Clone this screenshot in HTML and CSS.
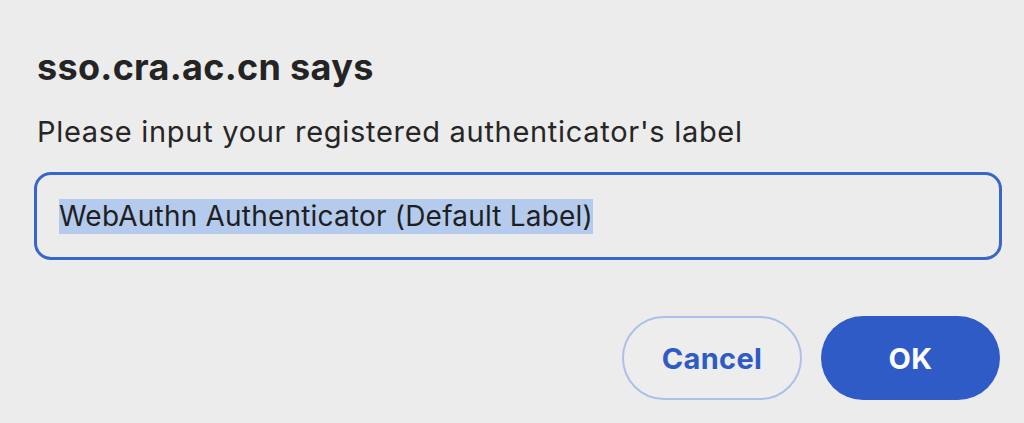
FILE: index.html
```html
<!DOCTYPE html>
<html lang="en">
<head>
<meta charset="utf-8">
<title>sso.cra.ac.cn says</title>
<link rel="stylesheet" href="styles.css">
</head>
<body>
<div class="dialog">
  <h1 class="title">sso.cra.ac.cn says</h1>
  <p class="message">Please input your registered authenticator's label</p>
  <div class="field"><span class="selected">WebAuthn Authenticator (Default Label)</span></div>
  <div class="actions">
    <button class="btn btn-cancel">Cancel</button>
    <button class="btn btn-ok">OK</button>
  </div>
</div>
</body>
</html>
```
FILE: styles.css
```css
html, body {
  margin: 0;
  padding: 0;
  background: #ececec;
}
body {
  font-family: Inter, "Liberation Sans", Arial, sans-serif;
  color: #222222;
}
.dialog {
  padding: 44px 22px 0 34px;
  display: flex;
  flex-direction: column;
}
.title {
  margin: 0;
  padding-left: 3px;
  font-size: 36px;
  font-weight: 700;
  letter-spacing: 0.3px;
  line-height: 46px;
  color: #242424;
}
.message {
  margin: 24px 0 0;
  padding-left: 3px;
  font-size: 29px;
  letter-spacing: 0.7px;
  line-height: 36px;
  color: #262626;
}
.field {
  margin-top: 22px;
  height: 88px;
  box-sizing: border-box;
  border: 3px solid #3b66c9;
  border-radius: 17px;
  padding: 0 22px;
  display: flex;
  align-items: center;
  font-size: 28px;
  letter-spacing: 0.2px;
  color: #1f1f1f;
}
.selected {
  background: #b5cbee;
  line-height: 35px;
}
.actions {
  margin-top: 56px;
  display: flex;
  justify-content: flex-end;
  gap: 19px;
  padding-right: 2px;
}
.btn {
  font-family: Inter, "Liberation Sans", Arial, sans-serif;
  font-weight: 700;
  font-size: 29px;
  letter-spacing: 0.3px;
  height: 84px;
  width: 180px;
  border-radius: 42px;
  box-sizing: border-box;
  cursor: pointer;
}
.btn-cancel {
  background: #ededed;
  border: 2px solid #adc0ea;
  color: #2f5bc4;
}
.btn-ok {
  width: 179px;
  background: #2e5bc6;
  border: none;
  color: #ffffff;
}
```
